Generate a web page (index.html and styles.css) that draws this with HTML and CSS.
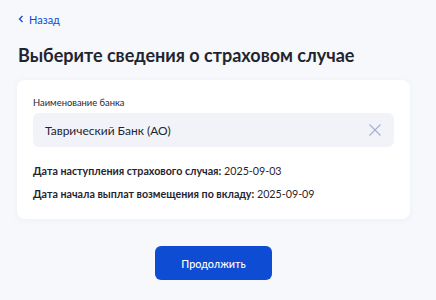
FILE: index.html
```html
<!DOCTYPE html>
<html lang="ru">
<head>
<meta charset="utf-8">
<link rel="stylesheet" href="styles.css">
</head>
<body>
<div class="page">
  <a class="back" href="#"><svg class="chev" width="6" height="8" viewBox="0 0 6 8"><path d="M4.5 1 L1.5 4 L4.5 7" fill="none" stroke="#0d4cd3" stroke-width="1.3"/></svg><span>Назад</span></a>
  <h1 class="title">Выберите сведения о страховом случае</h1>
  <div class="card">
    <div class="label">Наименование банка</div>
    <div class="input">
      <span class="value">Таврический Банк (АО)</span>
      <svg class="clear" width="12" height="12" viewBox="0 0 12 12"><path d="M0.5 0.5 L11.5 11.5 M11.5 0.5 L0.5 11.5" stroke="#a7aed0" stroke-width="1.1"/></svg>
    </div>
    <p class="row"><b>Дата наступления страхового случая:</b> 2025-09-03</p>
    <p class="row"><b>Дата начала выплат возмещения по вкладу:</b> 2025-09-09</p>
  </div>
  <div class="actions">
    <button class="btn">Продолжить</button>
  </div>
</div>
</body>
</html>
```
FILE: styles.css
```css
html, body { margin: 0; padding: 0; }
body {
  background: #f6f8fb;
  font-family: Lato, "Noto Sans", sans-serif;
  color: #1f2530;
  width: 436px;
  height: 300px;
  overflow: hidden;
}
.page { padding: 12px 18px 0 17px; }
.back {
  display: flex;
  align-items: center;
  gap: 5px;
  color: #0d4cd3;
  text-decoration: none;
  font-size: 11px;
  height: 14px;
  margin-left: 1px;
}
.title {
  margin: 18px 0 0 1px;
  font-size: 18px;
  font-weight: 700;
  line-height: 22px;
  color: #1f2530;
}
.card {
  margin-top: 14px;
  background: #fff;
  border-radius: 8px;
  padding: 16px 16px 18px 16px;
  width: 361px;
  box-shadow: 0 1px 6px rgba(120, 140, 180, 0.08);
}
.label {
  font-size: 9.4px;
  line-height: 13px;
  color: #1f2530;
}
.input {
  margin-top: 4px;
  height: 34px;
  background: #f1f3f8;
  border-radius: 6px;
  display: flex;
  align-items: center;
  justify-content: space-between;
  padding: 0 13px 0 12px;
}
.value { font-size: 12px; color: #1f2530; }
.row {
  margin: 0;
  font-size: 10.7px;
  line-height: 14px;
  color: #1f2530;
}
.input + .row { margin-top: 17px; }
.row + .row { margin-top: 9px; }
.row b { font-weight: 700; }
.actions {
  display: flex;
  justify-content: center;
  margin-top: 27px;
  width: 393px;
}
.btn {
  width: 117px;
  height: 34px;
  border: none;
  border-radius: 6px;
  background: #0d4cd3;
  color: #fff;
  font-family: Lato, "Noto Sans", sans-serif;
  font-size: 10.8px;
  font-weight: 500;
}
```
